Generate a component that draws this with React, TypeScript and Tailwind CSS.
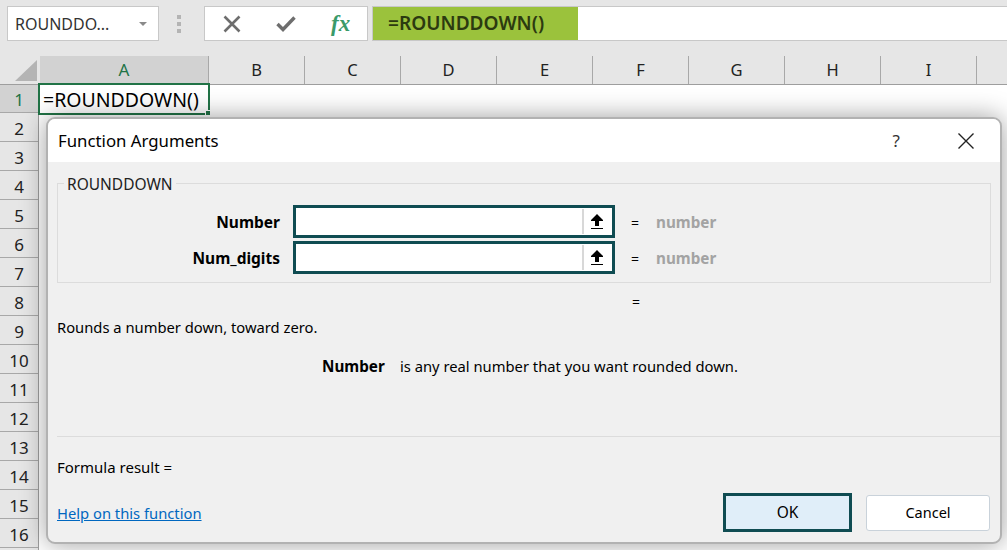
const columns = ["B", "C", "D", "E", "F", "G", "H", "I", ""];
const rows = [2, 3, 4, 5, 6, 7, 8, 9, 10, 11, 12, 13, 14, 15, 16];

const UploadIcon = () => (
  <svg width="12" height="16" viewBox="0 0 12 16" className="block mr-[2px]">
    <path d="M6 0 L12 6 L12 7 L8 7 L8 12 L4 12 L4 7 L0 7 L0 6 Z" fill="#000" />
    <rect x="0" y="14" width="12" height="1" fill="#000" />
  </svg>
);

const ArgRow = ({ label }: { label: string }) => (
  <div className="flex items-center h-[33px]">
    <div className="w-[235px] mt-[2px] pr-[13px] text-right text-[15.5px] font-bold text-black">{label}</div>
    <div className="w-[322px] h-[33px] border-[3px] border-[#0f4c52] bg-white flex justify-end">
      <div className="w-[30px] my-[1px] border-l-2 border-[#d8d8d8] flex items-center justify-center">
        <UploadIcon />
      </div>
    </div>
    <div className="ml-[16px] mt-[2px] w-[25px] text-[14px] text-black">=</div>
    <div className="mt-[2px] text-[15.25px] font-bold text-[#a3a3a3]">number</div>
  </div>
);

const Dialog = () => (
  <div className="absolute left-[46px] top-[32px] w-[956px] h-[427px] rounded-[9px] border-2 border-[#b2b2b2] bg-[#f0f0f0] overflow-hidden shadow-[0_0_26px_rgba(0,0,0,0.38)]">
    <div className="h-[43px] bg-white flex items-center pl-[10px]">
      <span className="text-[16.8px] text-black">Function Arguments</span>
      <span className="ml-auto text-[17px] text-[#333] mr-[57px]">?</span>
      <svg width="18" height="18" viewBox="0 0 18 18" className="mr-[25px]">
        <path d="M1.5 1.5 L16.5 16.5 M16.5 1.5 L1.5 16.5" stroke="#222" strokeWidth="1.4" fill="none" />
      </svg>
    </div>
    <div className="px-[9px]">
      <div className="relative mt-[21px] h-[100px] w-[934px] border border-[#dcdcdc] pt-[21px] flex flex-col gap-[3px]">
        <span className="absolute left-[6px] -top-[9px] bg-[#f0f0f0] px-[3px] text-[15.5px] leading-[18px] text-[#222]">ROUNDDOWN</span>
        <ArgRow label="Number" />
        <ArgRow label="Num_digits" />
      </div>
      <div className="mt-[10px] pl-[575px] text-[14px] leading-[18px] text-black">=</div>
      <div className="mt-[6px] text-[14.75px] leading-[20px] text-black">Rounds a number down, toward zero.</div>
      <div className="mt-[19px] flex text-[14.75px] leading-[20px] text-black">
        <span className="ml-[265px] w-[78px] text-[15.25px] font-bold">Number</span>
        <span>is any real number that you want rounded down.</span>
      </div>
      <div className="mt-[60px] h-px w-[945px] bg-[#dcdcdc]" />
      <div className="mt-[20px] text-[15px] leading-[20px] text-black">Formula result =</div>
      <div className="mt-[16px] w-[933px] flex items-center">
        <a className="text-[14.75px] leading-[20px] text-[#0067c0] underline">Help on this function</a>
        <button className="ml-auto h-[39px] w-[129px] border-[3px] border-[#0f4c52] bg-[#e0eef9] text-[15.5px] text-black">OK</button>
        <button className="ml-[14px] h-[36px] w-[124px] rounded-[3px] border border-[#c9d2da] bg-white text-[14.5px] text-black">Cancel</button>
      </div>
    </div>
  </div>
);

export default function App() {
  return (
    <div className="w-[1007px] h-[550px] overflow-hidden bg-[#e6e6e6] font-['Noto_Sans','Open_Sans',sans-serif]">
      <div className="h-[56px] flex items-start pt-[6px]">
        <div className="ml-[7px] w-[152px] h-[35px] bg-white border border-[#c8c8c8] flex items-center pl-[7px]">
          <span className="text-[16px] text-[#333]">ROUNDDO...</span>
          <span className="ml-auto mr-[11px] border-x-[4px] border-t-[4px] border-x-transparent border-t-[#8a8a8a]" />
        </div>
        <div className="ml-[18px] mt-[9px] w-[4px] flex flex-col gap-[3px]">
          <div className="h-[4px] bg-[#b4b4b4]" />
          <div className="h-[4px] bg-[#b4b4b4]" />
          <div className="h-[4px] bg-[#b4b4b4]" />
        </div>
        <div className="ml-[23px] w-[164px] h-[35px] bg-white border border-[#c8c8c8] flex items-center">
          <svg width="18" height="18" viewBox="0 0 18 18" className="ml-[18px]">
            <path d="M1.5 1.5 L16.5 16.5 M16.5 1.5 L1.5 16.5" stroke="#6e6e6e" strokeWidth="2.6" fill="none" />
          </svg>
          <svg width="20" height="16" viewBox="0 0 20 16" className="ml-[35px]">
            <path d="M1.5 8 L7 13.5 L18.5 1.5" stroke="#6e6e6e" strokeWidth="3.4" fill="none" />
          </svg>
          <span className="ml-[35px] font-['Liberation_Serif',serif] italic font-bold text-[23px] leading-none text-[#3a9a6a]">fx</span>
        </div>
        <div className="ml-[4px] w-[635px] h-[35px] bg-white border-y border-l border-[#c8c8c8] flex">
          <div className="w-[205px] bg-[#9bc23c] flex items-center pl-[15px] text-[19.1px] text-[#2c3a10] font-semibold">=ROUNDDOWN()</div>
        </div>
      </div>

      <div className="h-[29px] flex border-b border-[#9e9e9e]">
        <div className="w-[40px] shrink-0 h-full relative">
          <div className="absolute left-[15px] top-[4px] border-l-[22px] border-b-[21px] border-l-transparent border-b-[#b4b4b4]" />
        </div>
        <div className="w-[169px] shrink-0 bg-[#d2d2d2] border-r border-[#a8a8a8] text-center text-[17px] leading-[28px] text-[#217346]">A</div>
        {columns.map((c) => (
          <div key={c} className="w-[96px] shrink-0 border-r border-[#a8a8a8] text-center text-[16.5px] leading-[28px] text-[#222]">{c}</div>
        ))}
      </div>

      <div className="relative h-[465px] flex">
        <div className="w-[39px] shrink-0 border-r border-[#9e9e9e]">
          <div className="h-[28px] bg-[#d2d2d2] border-b border-[#a8a8a8] text-center text-[17px] leading-[30px] text-[#217346]">1</div>
          {rows.map((r) => (
            <div key={r} className="h-[29px] border-b border-[#a8a8a8] text-center text-[17px] leading-[31px] text-[#222]">{r}</div>
          ))}
        </div>
        <div className="flex-1 bg-white" />
        <div className="absolute left-[38px] -top-[2px] w-[172px] h-[32px] border-2 border-[#217346] pl-[3px] text-[19.5px] leading-[30px] text-black whitespace-nowrap">
          =ROUNDDOWN()
          <div className="absolute -right-[3px] -bottom-[3px] w-[6px] h-[6px] bg-[#217346] border border-white" />
        </div>
        <Dialog />
      </div>
    </div>
  );
}
